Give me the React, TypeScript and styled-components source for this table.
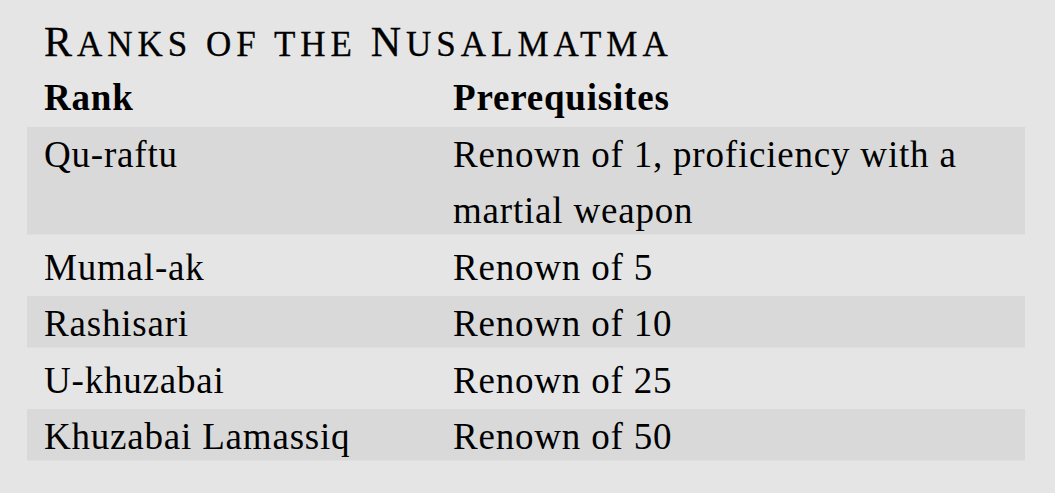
import React from "react";
import styled, { createGlobalStyle } from "styled-components";

const Global = createGlobalStyle`
  html, body { margin: 0; padding: 0; background: #e5e5e5; }
  body { font-family: "Liberation Serif", "Times New Roman", serif; color: #000; }
`;

const Page = styled.div`
  width: 1055px;
  height: 493px;
  box-sizing: border-box;
  padding: 21px 30px 0 27px;
  background: #e5e5e5;
`;

const Title = styled.h2`
  margin: 0 0 4px 17px;
  font-weight: normal;
  font-size: 42px;
  line-height: 42px;
  letter-spacing: 5px;
  text-transform: uppercase;
  white-space: nowrap;
  -webkit-text-stroke: 0.3px #000;
`;

const Small = styled.span`
  font-size: 35px;
`;

const Table = styled.div`
  display: flex;
  flex-direction: column;
`;

const Row = styled.div<{ $striped?: boolean; $head?: boolean }>`
  display: grid;
  grid-template-columns: 409px 1fr;
  padding: 0 17px;
  font-size: 37px;
  line-height: 56.5px;
  letter-spacing: 0.8px;
  font-weight: ${(p) => (p.$head ? "bold" : "normal")};
  background: ${(p) =>
    p.$striped
      ? "linear-gradient(#d9d9d9, #d9d9d9) top left / 100% calc(100% - 5.5px) no-repeat"
      : "transparent"};
`;

const Cell = styled.div``;

const rows: [string, string][] = [
  ["Qu-raftu", "Renown of 1, proficiency with a martial weapon"],
  ["Mumal-ak", "Renown of 5"],
  ["Rashisari", "Renown of 10"],
  ["U-khuzabai", "Renown of 25"],
  ["Khuzabai Lamassiq", "Renown of 50"],
];

export default function App() {
  return (
    <>
      <Global />
      <Page>
        <Title>
          R<Small>anks of the </Small>N<Small>usalmatma</Small>
        </Title>
        <Table>
          <Row $head>
            <Cell>Rank</Cell>
            <Cell>Prerequisites</Cell>
          </Row>
          {rows.map(([a, b], i) => (
            <Row key={a} $striped={i % 2 === 0}>
              <Cell>{a}</Cell>
              <Cell>{b}</Cell>
            </Row>
          ))}
        </Table>
      </Page>
    </>
  );
}
